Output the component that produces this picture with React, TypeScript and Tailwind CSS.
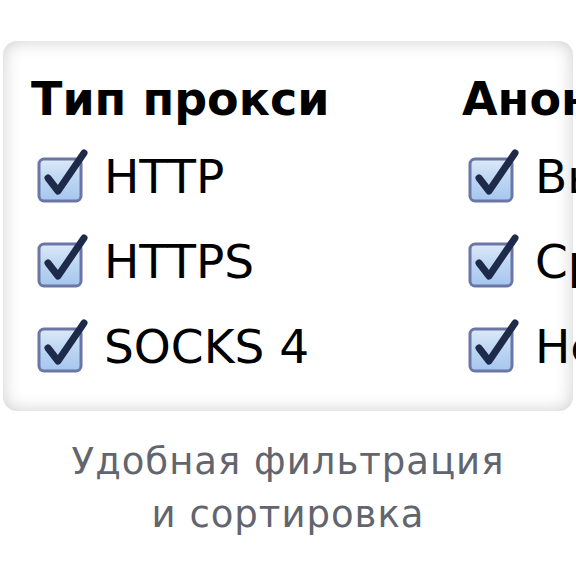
import React from 'react';

const CheckBox = () => (
  <svg width="52" height="56" viewBox="0 0 52 56" className="shrink-0">
    <defs>
      <linearGradient id="cbFill" x1="0" y1="0" x2="0" y2="1">
        <stop offset="0" stopColor="#dce9f8" />
        <stop offset="0.5" stopColor="#bcd5f2" />
        <stop offset="1" stopColor="#a6c6ee" />
      </linearGradient>
    </defs>
    <rect x="2" y="10" width="42" height="42" rx="5" fill="url(#cbFill)" stroke="#6b76a6" strokeWidth="3" />
    <path d="M11 29 L21 42 L47 4" fill="none" stroke="#1d2a4a" strokeWidth="7" strokeLinecap="round" strokeLinejoin="round" />
  </svg>
);

const Option = ({ label }: { label: string }) => (
  <div className="flex items-center gap-[15px] h-[85px]">
    <CheckBox />
    <span className="text-[47px] leading-none text-black whitespace-nowrap">{label}</span>
  </div>
);

const App = () => {
  const proxyTypes = ['HTTP', 'HTTPS', 'SOCKS 4'];
  const anonymity = ['Высокая', 'Средняя', 'Нет'];

  return (
    <div className="w-[576px] h-[576px] bg-white overflow-hidden font-['DejaVu_Sans',sans-serif]">
      <div className="pt-[41px] pl-[3px]">
        <div className="w-[570px] h-[370px] rounded-[14px] bg-white shadow-[inset_0_0_18px_rgba(0,0,0,0.2)] pt-[35px] pl-[28px] flex gap-[36px] overflow-visible">
          <div className="w-[395px] shrink-0">
            <h2 className="text-[46px] font-bold leading-none text-black whitespace-nowrap mb-[12px]">Тип прокси</h2>
            <div className="pl-[6px]">
              {proxyTypes.map(t => <Option key={t} label={t} />)}
            </div>
          </div>
          <div className="shrink-0">
            <h2 className="text-[46px] font-bold leading-none text-black whitespace-nowrap mb-[12px]">Анонимность</h2>
            <div className="pl-[6px]">
              {anonymity.map(t => <Option key={t} label={t} />)}
            </div>
          </div>
        </div>
      </div>
      <p className="mt-[24px] text-center text-[37px] leading-[53px] text-[#62646e] tracking-[1px]">
        Удобная фильтрация
        <br />
        и сортировка
      </p>
    </div>
  );
};

export default App;
